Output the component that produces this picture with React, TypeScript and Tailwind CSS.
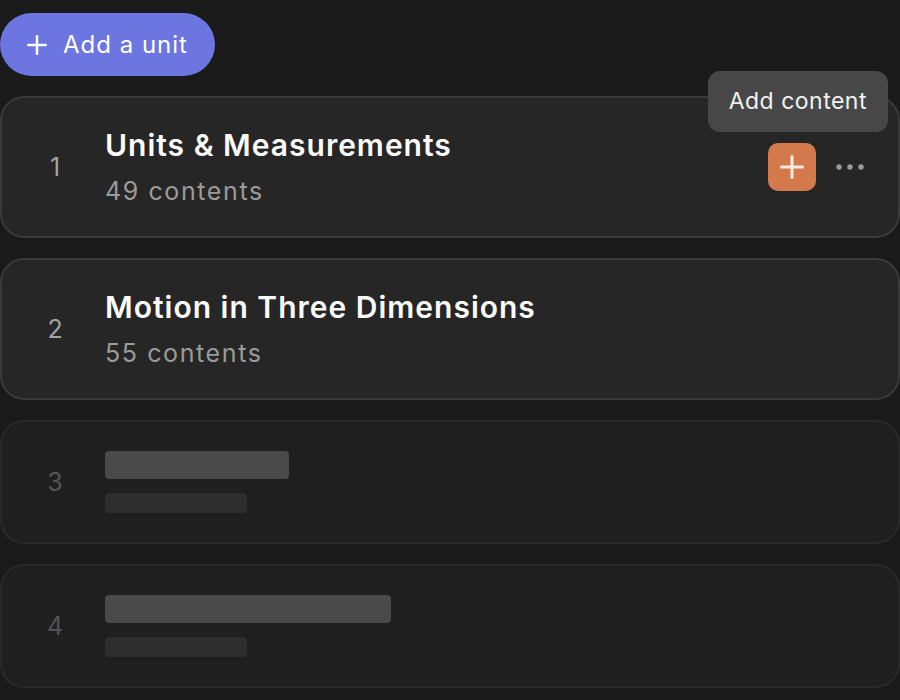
import { Plus } from 'lucide-react'

interface Unit {
  title: string
  count: number
}

const units: Unit[] = [
  { title: 'Units & Measurements', count: 49 },
  { title: 'Motion in Three Dimensions', count: 55 },
]

const skeletons = [184, 286]

function Dots() {
  return (
    <svg width="28" height="6" viewBox="0 0 28 6" className="text-[#9c9c9c]">
      <circle cx="3" cy="3" r="2.7" fill="currentColor" />
      <circle cx="14" cy="3" r="2.7" fill="currentColor" />
      <circle cx="25" cy="3" r="2.7" fill="currentColor" />
    </svg>
  )
}

function UnitCard({ unit, index, active }: { unit: Unit; index: number; active?: boolean }) {
  return (
    <div className="relative flex items-center h-[142px] rounded-[24px] border-2 border-[#393939] bg-[#262626]">
      <div className="w-[103px] pl-[3px] text-center text-[25px] leading-8 text-[#a3a3a3]">{index}</div>
      <div className="flex flex-col gap-[12px]">
        <div className="text-[30px] leading-9 font-semibold tracking-[1px] text-[#fafafa]">{unit.title}</div>
        <div className="text-[25px] leading-8 tracking-[1.6px] text-[#9b9b9b]">{unit.count} contents</div>
      </div>
      {active && (
        <>
          <div className="ml-auto mr-[34px] flex items-center gap-[20px]">
            <button className="flex items-center justify-center w-[48px] h-[48px] rounded-[10px] bg-[#d4794b] text-[#f7ebe3]">
              <Plus size={36} strokeWidth={2} />
            </button>
            <Dots />
          </div>
          <div className="absolute top-[-27px] right-[10px] h-[61px] px-[21px] flex items-center rounded-[12px] bg-[#474747] text-[23px] tracking-[0.5px] text-[#f2f2f2]">
            Add content
          </div>
        </>
      )}
    </div>
  )
}

function SkeletonCard({ index, width }: { index: number; width: number }) {
  return (
    <div className="flex items-center h-[124px] rounded-[24px] border-2 border-[#292929] bg-[#1f1f1f]">
      <div className="w-[103px] pl-[3px] text-center text-[25px] leading-8 text-[#545454]">{index}</div>
      <div className="flex flex-col gap-[14px]">
        <div className="h-[28px] rounded-[4px] bg-[#4a4a4a]" style={{ width }} />
        <div className="h-[20px] w-[142px] rounded-[4px] bg-[#2e2e2e]" />
      </div>
    </div>
  )
}

export default function App() {
  return (
    <div className="min-h-[700px] bg-[#1a1a1a] pt-[13px] font-['Inter',sans-serif]">
      <button className="flex items-center gap-[11px] h-[63px] pl-[22px] pr-[27px] rounded-full bg-[#6d75e1] text-white text-[24px] tracking-[1px]">
        <Plus size={30} strokeWidth={2} />
        <span>Add a unit</span>
      </button>
      <div className="mt-[20px] flex flex-col gap-[20px]">
        {units.map((u, i) => (
          <UnitCard key={i} unit={u} index={i + 1} active={i === 0} />
        ))}
        {skeletons.map((w, i) => (
          <SkeletonCard key={i} index={units.length + i + 1} width={w} />
        ))}
      </div>
    </div>
  )
}
